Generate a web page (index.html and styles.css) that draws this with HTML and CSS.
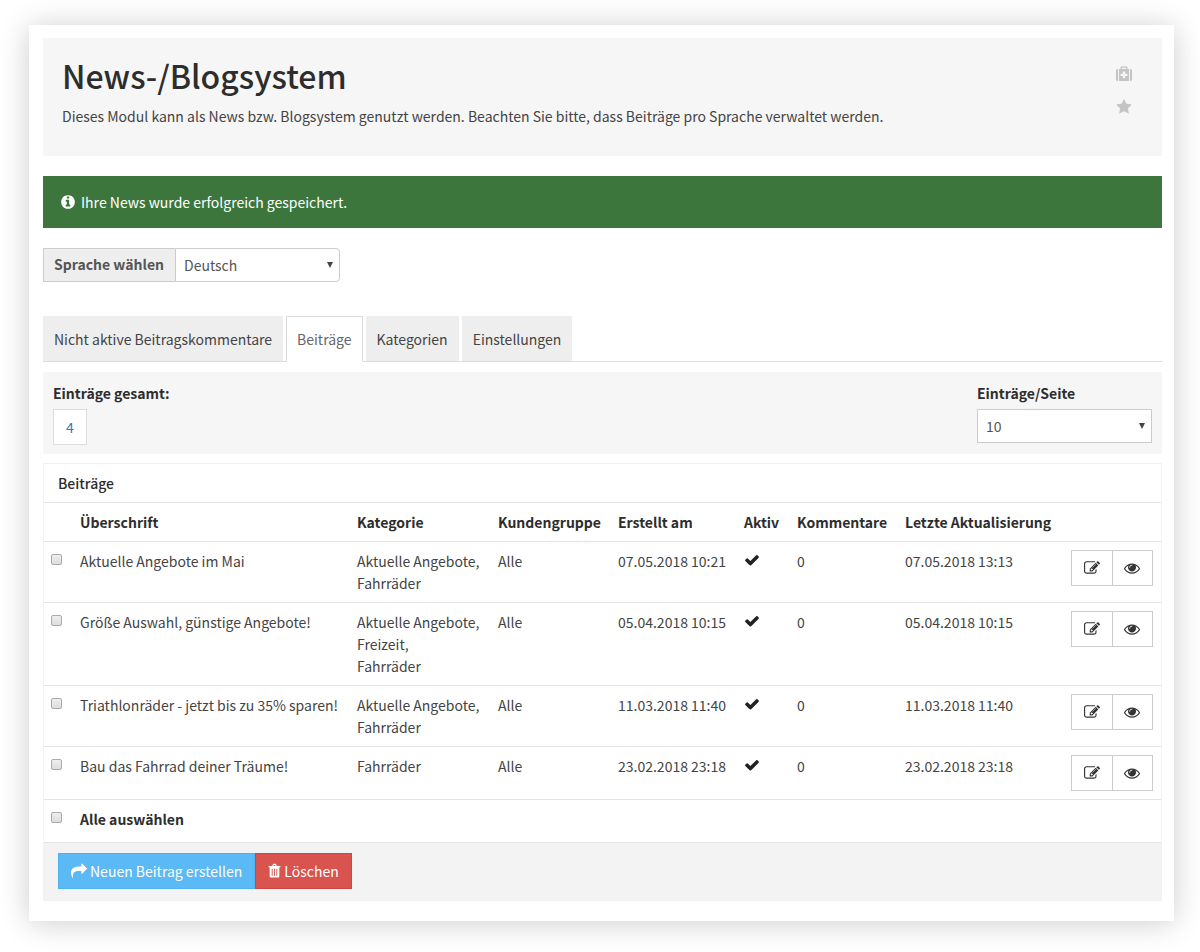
FILE: index.html
```
<!DOCTYPE html>
<html lang="de">
<head>
    <meta charset="UTF-8">
    <meta name="viewport" content="width=device-width, initial-scale=1.0">
    <title>News-/Blogsystem</title>
    <link rel="stylesheet" href="styles.css">
</head>
<body>
    <!-- Icon set -->
    <svg class="icon-set" aria-hidden="true">
        <symbol id="icon-check" viewBox="0 0 1792 1792"><path d="M1671 566q0 40-28 68l-724 724-136 136q-28 28-68 28t-68-28l-136-136-362-362q-28-28-28-68t28-68l136-136q28-28 68-28t68 28l294 295 656-657q28-28 68-28t68 28l136 136q28 28 28 68z"/></symbol>
        <symbol id="icon-star" viewBox="0 0 1792 1792"><path d="M1728 647q0 22-26 48l-363 354 86 500q1 7 1 20 0 21-10.500 35.500t-30.500 14.500q-19 0-40-12l-449-236-449 236q-22 12-40 12-21 0-31.500-14.500t-10.500-35.500q0-6 2-20l86-500-364-354q-25-27-25-48 0-37 56-46l502-73 225-455q19-41 49-41t49 41l225 455 502 73q56 9 56 46z"/></symbol>
        <symbol id="icon-edit" viewBox="0 0 1792 1792"><path d="M888 1184l116-116-152-152-116 116v56h96v96h56zm440-720q-16-16-33 1l-350 350q-17 17-1 33t33-1l350-350q17-17 1-33zm80 594v190q0 119-84.500 203.500t-203.500 84.500h-832q-119 0-203.500-84.500t-84.500-203.500v-832q0-119 84.500-203.500t203.500-84.500h832q63 0 117 25 15 7 18 23 3 17-9 29l-49 49q-14 14-32 8-23-6-45-6h-832q-66 0-113 47t-47 113v832q0 66 47 113t113 47h832q66 0 113-47t47-113v-126q0-13 9-22l64-64q15-15 35-7t20 29zm-96-738l288 288-672 672h-288v-288zm444 132l-92 92-288-288 92-92q28-28 68-28t68 28l152 152q28 28 28 68t-28 68z"/></symbol>
        <symbol id="icon-eye" viewBox="0 0 1792 1792"><path d="M1664 960q-152-236-381-353 61 104 61 225 0 185-131.500 316.500t-316.500 131.500-316.500-131.500-131.500-316.500q0-121 61-225-229 117-381 353 133 205 333.500 326.500t434.500 121.500 434.500-121.500 333.500-326.500zm-720-384q0-20-14-34t-34-14q-125 0-214.500 89.500t-89.500 214.500q0 20 14 34t34 14 34-14 14-34q0-86 61-147t147-61q20 0 34-14t14-34zm848 384q0 34-20 69-140 230-376.500 368.500t-499.500 138.500-499.500-139-376.500-368q-20-35-20-69t20-69q140-229 376.500-368t499.500-139 499.500 139 376.500 368q20 35 20 69z"/></symbol>
        <symbol id="icon-info" viewBox="0 0 1792 1792"><path d="M1152 1376v-160q0-14-9-23t-23-9h-96v-512q0-14-9-23t-23-9h-320q-14 0-23 9t-9 23v160q0 14 9 23t23 9h96v320h-96q-14 0-23 9t-9 23v160q0 14 9 23t23 9h448q14 0 23-9t9-23zm-128-896v-160q0-14-9-23t-23-9h-192q-14 0-23 9t-9 23v160q0 14 9 23t23 9h192q14 0 23-9t9-23zm640 416q0 209-103 385.500t-279.500 279.500-385.500 103-385.500-103-279.500-279.500-103-385.500 103-385.500 279.500-279.500 385.500-103 385.500 103 279.500 279.500 103 385.500z"/></symbol>
        <symbol id="icon-share" viewBox="0 0 1792 1792"><path d="M1792 640q0 26-19 45l-512 512q-19 19-45 19t-45-19-19-45v-256h-224q-98 0-175.500 6t-154 21.500-133 42.500-105.500 69.500-80 101-48.500 138.500-17.500 181q0 55 5 123 0 6 2.500 23.500t2.500 26.500q0 15-8.500 25t-23.500 10q-16 0-28-17-7-9-13-22t-13.500-30-10.500-24q-127-285-127-451 0-199 53-333 162-403 875-403h224v-256q0-26 19-45t45-19 45 19l512 512q19 19 19 45z"/></symbol>
        <symbol id="icon-trash" viewBox="0 0 14 16"><path fill-rule="evenodd" d="M4.500 2.500L5.200 1Q5.500.3 6.200.3h1.600Q8.500.3 8.800 1l.7 1.500H13q.4 0 .4.400v.7q0 .4-.4.400h-.8v9.600q0 1.400-1.200 1.400H3q-1.200 0-1.200-1.400V4H1Q.6 4 .6 3.600v-.7q0-.4.4-.4zM5.800 2.500h2.400l-.5-1H6.300zM4 5.500v7.500h1V5.500zM6.500 5.500v7.500h1V5.500zM9 5.500v7.500h1V5.500z"/></symbol>
        <symbol id="icon-medkit" viewBox="0 0 16 16"><path fill-rule="evenodd" d="M0 4.500Q0 3 1.500 3H2v12h-.5Q0 15 0 13.500zM14 3h.500Q16 3 16 4.500v9q0 1.500-1.500 1.500H14zM3 3h1.500V1.500q0-1 1-1h5q1 0 1 1V3H13v12H3zM5.800 1.800V3h4.400V1.800zM6.800 5.500v2.200H4.600v2.400h2.200v2.200h2.400v-2.200h2.200V7.700H9.200V5.500z"/></symbol>
    </svg>

    <div class="page">
        <header class="page-header">
            <div>
                <h1>News-/Blogsystem</h1>
                <p>Dieses Modul kann als News bzw. Blogsystem genutzt werden. Beachten Sie bitte, dass Beiträge pro Sprache verwaltet werden.</p>
            </div>
            <div class="header-tools">
                <a href="#" aria-label="Hilfe"><svg class="icon-large"><use href="#icon-medkit"/></svg></a>
                <a href="#" aria-label="Favorit"><svg class="icon-large"><use href="#icon-star"/></svg></a>
            </div>
        </header>

        <div class="alert" role="status">
            <svg class="icon-large"><use href="#icon-info"/></svg>
            <span>Ihre News wurde erfolgreich gespeichert.</span>
        </div>

        <div class="input-group">
            <label for="language">Sprache wählen</label>
            <div class="select">
                <select id="language">
                    <option>Deutsch</option>
                </select>
            </div>
        </div>

        <nav class="tabs">
            <a href="#">Nicht aktive Beitragskommentare</a>
            <a href="#" class="active">Beiträge</a>
            <a href="#">Kategorien</a>
            <a href="#">Einstellungen</a>
        </nav>

        <div class="pager">
            <div>
                <strong>Einträge gesamt:</strong>
                <a href="#" class="pager-count">4</a>
            </div>
            <div class="pager-size">
                <label for="per-page">Einträge/Seite</label>
                <div class="select">
                    <select id="per-page">
                        <option>10</option>
                    </select>
                </div>
            </div>
        </div>

        <section class="panel">
            <h2>Beiträge</h2>
            <table>
                <colgroup>
                    <col class="col-check">
                    <col>
                    <col class="col-category">
                    <col class="col-group">
                    <col class="col-created">
                    <col class="col-active">
                    <col class="col-comments">
                    <col class="col-updated">
                    <col class="col-actions">
                </colgroup>
                <thead>
                    <tr>
                        <th></th>
                        <th>Überschrift</th>
                        <th>Kategorie</th>
                        <th>Kundengruppe</th>
                        <th>Erstellt am</th>
                        <th>Aktiv</th>
                        <th>Kommentare</th>
                        <th>Letzte Aktualisierung</th>
                        <th></th>
                    </tr>
                </thead>
                <tbody>
                    <tr>
                        <td><input type="checkbox" id="post-1"></td>
                        <td><label for="post-1">Aktuelle Angebote im Mai</label></td>
                        <td>Aktuelle Angebote,<br>Fahrräder</td>
                        <td>Alle</td>
                        <td>07.05.2018 10:21</td>
                        <td><svg class="icon-large"><use href="#icon-check"/></svg></td>
                        <td>0</td>
                        <td>07.05.2018 13:13</td>
                        <td>
                            <div class="actions">
                                <button type="button" aria-label="Bearbeiten"><svg class="icon-large"><use href="#icon-edit"/></svg></button>
                                <button type="button" aria-label="Ansehen"><svg class="icon-large"><use href="#icon-eye"/></svg></button>
                            </div>
                        </td>
                    </tr>
                    <tr>
                        <td><input type="checkbox" id="post-2"></td>
                        <td><label for="post-2">Größe Auswahl, günstige Angebote!</label></td>
                        <td>Aktuelle Angebote,<br>Freizeit,<br>Fahrräder</td>
                        <td>Alle</td>
                        <td>05.04.2018 10:15</td>
                        <td><svg class="icon-large"><use href="#icon-check"/></svg></td>
                        <td>0</td>
                        <td>05.04.2018 10:15</td>
                        <td>
                            <div class="actions">
                                <button type="button" aria-label="Bearbeiten"><svg class="icon-large"><use href="#icon-edit"/></svg></button>
                                <button type="button" aria-label="Ansehen"><svg class="icon-large"><use href="#icon-eye"/></svg></button>
                            </div>
                        </td>
                    </tr>
                    <tr>
                        <td><input type="checkbox" id="post-3"></td>
                        <td><label for="post-3">Triathlonräder - jetzt bis zu 35% sparen!</label></td>
                        <td>Aktuelle Angebote,<br>Fahrräder</td>
                        <td>Alle</td>
                        <td>11.03.2018 11:40</td>
                        <td><svg class="icon-large"><use href="#icon-check"/></svg></td>
                        <td>0</td>
                        <td>11.03.2018 11:40</td>
                        <td>
                            <div class="actions">
                                <button type="button" aria-label="Bearbeiten"><svg class="icon-large"><use href="#icon-edit"/></svg></button>
                                <button type="button" aria-label="Ansehen"><svg class="icon-large"><use href="#icon-eye"/></svg></button>
                            </div>
                        </td>
                    </tr>
                    <tr>
                        <td><input type="checkbox" id="post-4"></td>
                        <td><label for="post-4">Bau das Fahrrad deiner Träume!</label></td>
                        <td>Fahrräder</td>
                        <td>Alle</td>
                        <td>23.02.2018 23:18</td>
                        <td><svg class="icon-large"><use href="#icon-check"/></svg></td>
                        <td>0</td>
                        <td>23.02.2018 23:18</td>
                        <td>
                            <div class="actions">
                                <button type="button" aria-label="Bearbeiten"><svg class="icon-large"><use href="#icon-edit"/></svg></button>
                                <button type="button" aria-label="Ansehen"><svg class="icon-large"><use href="#icon-eye"/></svg></button>
                            </div>
                        </td>
                    </tr>
                </tbody>
                <tfoot>
                    <tr>
                        <td><input type="checkbox" id="select-all"></td>
                        <td colspan="8"><label for="select-all">Alle auswählen</label></td>
                    </tr>
                </tfoot>
            </table>
            <div class="panel-footer">
                <button type="button" class="btn btn-info"><svg class="icon-large"><use href="#icon-share"/></svg>Neuen Beitrag erstellen</button>
                <button type="button" class="btn btn-danger"><svg class="icon"><use href="#icon-trash"/></svg>Löschen</button>
            </div>
        </section>
    </div>
</body>
</html>
```
FILE: styles.css
```
* { box-sizing: border-box; }
body { font-family: "Noto Sans CJK SC", "Open Sans", sans-serif; font-size: 14px; line-height: 22px; color: #444; margin: 0; padding: 25px 26px 32px 29px; background-color: #fff; }
a { color: inherit; text-decoration: none; }
button, select { font: inherit; }
svg { display: block; fill: currentColor; }
.icon-set { position: absolute; width: 0; height: 0; }
.icon { width: 13px; height: 16px; }
.icon-large { width: 16px; height: 16px; }

.page { padding: 13px 12px 20px 14px; background: #fff; box-shadow: 0 2px 28px rgba(0, 0, 0, 0.2); }

.page-header { display: flex; justify-content: space-between; min-height: 118px; padding: 17px 30px 18px 19px; background: #f6f6f6; }
.page-header h1 { margin: 0 0 10px; font-size: 32px; line-height: 40px; font-weight: 500; color: #2d2d2d; }
.page-header p { margin: 0; }
.header-tools { display: flex; flex-direction: column; gap: 17px; padding-top: 11px; color: #c4c4c4; }

.alert { display: flex; align-items: center; gap: 5px; margin: 20px 0; padding: 15px 17px; background: #3c763d; color: #fff; }

.select { position: relative; }
.select::after { content: ""; position: absolute; right: 7px; top: 14px; border: 3px solid transparent; border-top: 6px solid #444; border-bottom: 0; pointer-events: none; }
select { display: block; width: 100%; height: 34px; padding: 0 8px; border: 1px solid #ccc; border-radius: 0; background: #fff; color: #555; appearance: none; }

.input-group { display: flex; max-width: 297px; margin-bottom: 34px; }
.input-group label { padding: 4px 11px 6px 10px; border: 1px solid #ccc; border-right: 0; background: #eee; font-weight: 700; color: #555; }
.input-group .select { flex: 1; }
.input-group select { border-radius: 0 4px 4px 0; }

.tabs { display: flex; gap: 3px; border-bottom: 1px solid #ddd; }
.tabs a { padding: 11px 10px; border: 1px solid #eee; border-bottom: 0; background: #eee; }
.tabs .active { margin-bottom: -1px; border-color: #ddd; background: #fff; color: #666; }

.pager { display: flex; justify-content: space-between; margin: 10px 0 9px; padding: 10px 10px 9px; background: #f6f6f6; }
.pager strong, .pager label { display: block; margin-bottom: 5px; font-weight: 700; color: #2d2d2d; }
.pager-count { display: inline-block; padding: 6px 12px; border: 1px solid #ddd; background: #fff; color: #337ab7; }
.pager-size { width: 175px; }

.panel { border: 1px solid #f2f2f2; }
.panel h2 { margin: 0; padding: 8px 14px; font-size: 14px; line-height: 22px; font-weight: 500; color: #2d2d2d; }
table { width: 100%; border-collapse: collapse; table-layout: fixed; }
th, td { padding: 8px; border-top: 1px solid #e4e4e4; text-align: left; vertical-align: top; white-space: nowrap; }
th { font-weight: 700; color: #2d2d2d; }
td > .icon-large { margin-top: 2px; color: #222; }
td:first-child { padding-left: 7px; }
tfoot td { padding: 8px 8px 12px; font-weight: 700; color: #2d2d2d; }
.col-check { width: 28px; }
.col-category { width: 141px; }
.col-group { width: 120px; }
.col-created { width: 126px; }
.col-active { width: 53px; }
.col-comments { width: 108px; }
.col-updated { width: 166px; }
.col-actions { width: 98px; }

input[type="checkbox"] { display: block; width: 11px; height: 11px; margin: 4px 0 0; border: 1px solid #aaa; border-radius: 2px; background: linear-gradient(#eee, #ddd); appearance: none; }
input[type="checkbox"]:checked { background: #337ab7; }

.actions { display: flex; }
.actions button { display: flex; align-items: center; justify-content: center; width: 42px; height: 36px; padding: 0; border: 1px solid #ccc; background: #fff; color: #333; cursor: pointer; }
.actions button + button { margin-left: -1px; }

.panel-footer { display: flex; padding: 10px 14px 11px; border-top: 1px solid #e4e4e4; background: #f3f3f3; }
.btn { display: flex; align-items: center; gap: 3px; height: 36px; padding: 0 12px; border: 1px solid; color: #fff; cursor: pointer; }
.btn-info { background: #5bb9f5; border-color: #4fb2f0; color: #fff; }
.btn-danger { background: #d9534f; border-color: #d0453f; color: #fff; }
```
